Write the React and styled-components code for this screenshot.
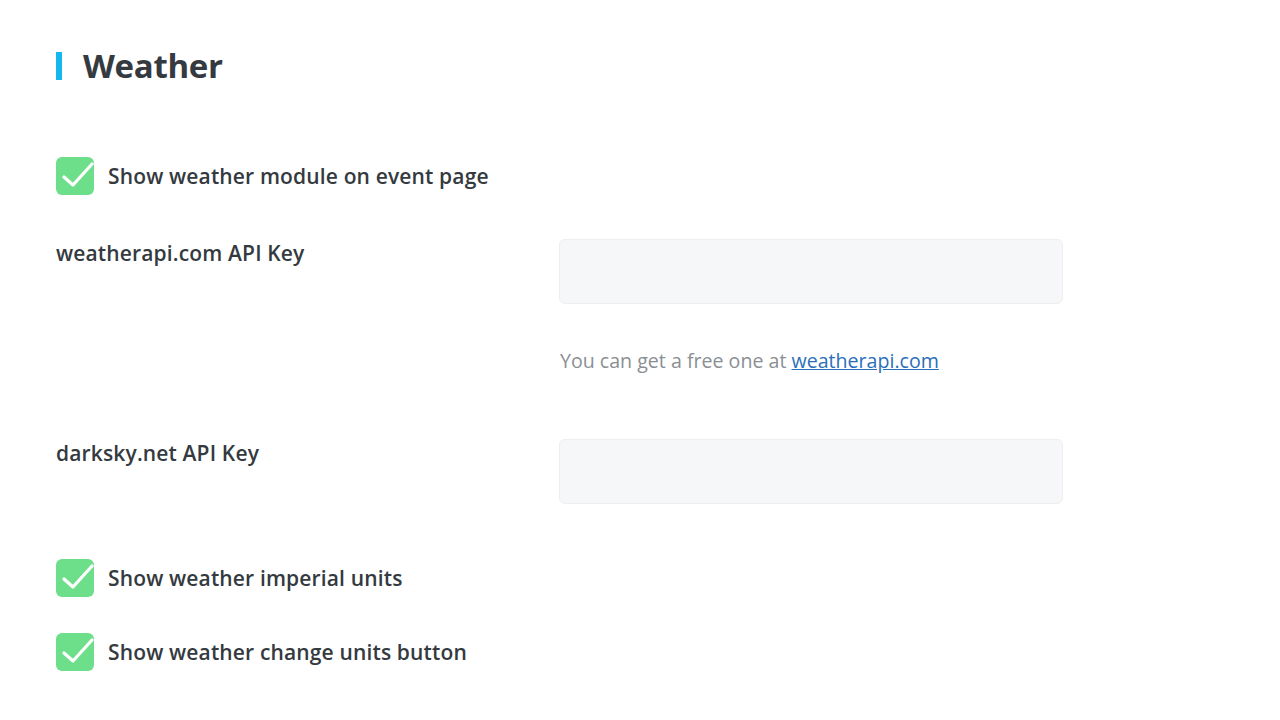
import React from 'react';
import styled, { createGlobalStyle } from 'styled-components';

const GlobalStyle = createGlobalStyle`
  html, body {
    margin: 0;
    padding: 0;
    background: #ffffff;
  }
  body {
    font-family: 'Open Sans', 'Noto Sans', sans-serif;
    color: #343a40;
  }
`;

function CheckRow({ label, top }) {
  return (
    <CheckLabel top={top}>
      <CheckBox>
        <svg width="38" height="38" viewBox="0 0 38 38" fill="none">
          <polyline
            points="8,20 17,28 36,7"
            stroke="#ffffff"
            strokeWidth="3.2"
            strokeLinecap="round"
            strokeLinejoin="round"
          />
        </svg>
      </CheckBox>
      <span>{label}</span>
    </CheckLabel>
  );
}

function FieldRow({ label, top, children }) {
  return (
    <FieldGrid top={top}>
      <FieldLabel>{label}</FieldLabel>
      <FieldBody>
        <TextInput type="text" />
        {children}
      </FieldBody>
    </FieldGrid>
  );
}

function App() {
  return (
    <>
      <GlobalStyle />
      <Page>
        <Title>Weather</Title>
        <CheckRow top={69} label="Show weather module on event page" />
        <FieldRow top={44} label="weatherapi.com API Key">
          <HelpText>
            You can get a free one at <a href="#weatherapi">weatherapi.com</a>
          </HelpText>
        </FieldRow>
        <FieldRow top={63} label="darksky.net API Key" />
        <CheckRow top={55} label="Show weather imperial units" />
        <CheckRow top={36} label="Show weather change units button" />
      </Page>
    </>
  );
}

const Page = styled.div`
  display: flex;
  flex-direction: column;
  padding: 44px 56px 40px;
`;

const Title = styled.h1`
  position: relative;
  margin: 0;
  padding-left: 27px;
  font-size: 33px;
  font-weight: 700;
  line-height: 44px;
  color: #343a40;
  letter-spacing: -0.3px;

  &::before {
    content: '';
    position: absolute;
    left: 0;
    top: 8px;
    width: 6px;
    height: 28px;
    background: #12b8ee;
  }
`;

const CheckLabel = styled.label`
  display: flex;
  align-items: center;
  gap: 14px;
  margin-top: ${({ top }) => top}px;
  font-size: 21px;
  font-weight: 600;
  letter-spacing: 0.15px;
  color: #343a40;
  line-height: 38px;
`;

const CheckBox = styled.span`
  display: flex;
  width: 38px;
  height: 38px;
  border-radius: 6px;
  background: #6ddf8a;
  flex-shrink: 0;
`;

const FieldGrid = styled.div`
  display: grid;
  grid-template-columns: 503px 504px;
  margin-top: ${({ top }) => top}px;
`;

const FieldLabel = styled.div`
  font-size: 21px;
  font-weight: 600;
  letter-spacing: 0.15px;
  line-height: 28px;
  color: #343a40;
`;

const FieldBody = styled.div`
  display: flex;
  flex-direction: column;
`;

const TextInput = styled.input`
  box-sizing: border-box;
  width: 504px;
  height: 65px;
  border: 1px solid #eceef0;
  border-radius: 6px;
  background: #f6f7f9;
  outline: none;
`;

const HelpText = styled.p`
  margin: 42px 0 0 1px;
  font-size: 19.6px;
  font-weight: 400;
  line-height: 30px;
  color: #8a8f94;

  & > a {
    color: #2a6fba;
    text-decoration: underline;
  }
`;

export default App;
